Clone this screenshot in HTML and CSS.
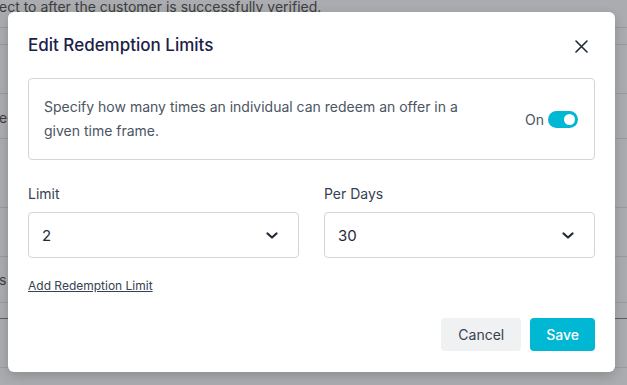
FILE: index.html
```html
<!DOCTYPE html>
<html lang="en">
<head>
<meta charset="UTF-8">
<meta name="viewport" content="width=device-width, initial-scale=1.0">
<title>Edit Redemption Limits</title>
<link rel="stylesheet" href="styles.css">
</head>
<body>
    <!-- page behind the dialog, dimmed -->
    <div class="page">
        <div class="row row-top"><span class="bg-text">ect to after the customer is successfully verified.</span></div>
        <div class="row h17"></div>
        <div class="row h49"></div>
        <div class="row h45"><span class="bg-side">ec</span></div>
        <div class="row h69"></div>
        <div class="row h49"></div>
        <div class="row h46"><span class="bg-side">s</span></div>
        <div class="row h16"></div>
        <div class="row h49 dark"></div>
        <div class="row h18"></div>
    </div>

    <div class="modal">
        <div class="modal-head">
            <h2 class="modal-title">Edit Redemption Limits</h2>
            <button class="close-btn" aria-label="Close">
                <svg width="13" height="13" viewBox="0 0 13 13"><path d="M1 1L12 12M12 1L1 12" stroke="#1f2937" stroke-width="1.6" stroke-linecap="round"/></svg>
            </button>
        </div>

        <div class="info-box">
            <p class="info-text">Specify how many times an individual can redeem an offer in a given time frame.</p>
            <div class="toggle-wrap">
                <span class="toggle-label">On</span>
                <span class="toggle"><span class="knob"></span></span>
            </div>
        </div>

        <div class="fields">
            <div class="field">
                <label class="field-label">Limit</label>
                <div class="select">
                    <span>2</span>
                    <svg width="12" height="7" viewBox="0 0 12 7"><path d="M1.5 1.5L6 5.5L10.5 1.5" fill="none" stroke="#1f2937" stroke-width="2.2" stroke-linecap="round" stroke-linejoin="round"/></svg>
                </div>
            </div>
            <div class="field">
                <label class="field-label">Per Days</label>
                <div class="select">
                    <span>30</span>
                    <svg width="12" height="7" viewBox="0 0 12 7"><path d="M1.5 1.5L6 5.5L10.5 1.5" fill="none" stroke="#1f2937" stroke-width="2.2" stroke-linecap="round" stroke-linejoin="round"/></svg>
                </div>
            </div>
        </div>

        <a class="add-link" href="#">Add Redemption Limit</a>

        <div class="modal-foot">
            <button class="btn btn-cancel">Cancel</button>
            <button class="btn btn-save">Save</button>
        </div>
    </div>
</body>
</html>
```

FILE: styles.css
```css
*{
    box-sizing: border-box;
}
body{
    margin:0;
    width:627px;
    height:385px;
    overflow:hidden;
    background:#abacaf;
    font-family: Inter, "Noto Sans", sans-serif;
}
.page{
    width:100%;
}
.row{
    border-top:1px solid #9a9b9e;
    position:relative;
}
.row-top{
    height:27px;
    border-top:none;
}
.h16{height:16px;}
.h17{height:17px;}
.h18{height:18px;}
.h45{height:45px;}
.h46{height:46px;}
.h49{height:49px;}
.h69{height:69px;}
.dark{
    border-top-color:#5d5e61;
}
.bg-text{
    display:block;
    margin-left:-1px;
    font-size:14px;
    line-height:14px;
    color:#3d3e41;
    white-space:nowrap;
    margin-top:0;
}
.bg-side{
    display:block;
    margin-left:-1px;
    padding-top:16px;
    font-size:14px;
    line-height:16px;
    color:#3d3e41;
}
.h46 .bg-side{
    padding-top:15px;
}

/* dialog */
.modal{
    position:absolute;
    left:8px;
    top:12px;
    width:607px;
    height:360px;
    background:#fff;
    border-radius:6px;
    box-shadow:0 4px 12px rgba(0,0,0,0.18);
    padding:20px 20px 20px 20px;
}
.modal-head{
    display:flex;
    align-items:center;
    justify-content:space-between;
    height:26px;
}
.modal-title{
    margin:0;
    font-size:17px;
    font-weight:500;
    color:#1b2146;
    line-height:26px;
}
.close-btn{
    border:none;
    background:none;
    padding:0;
    width:24px;
    height:24px;
    display:flex;
    align-items:center;
    justify-content:center;
    margin-right:2px;
    margin-top:2px;
}
.info-box{
    margin-top:20px;
    border:1px solid #d2d5da;
    border-radius:4px;
    padding:16px 16px 16px 15px;
    display:flex;
    align-items:center;
    justify-content:space-between;
}
.info-text{
    margin:0;
    width:430px;
    font-size:14px;
    line-height:24px;
    color:#4b5563;
}
.toggle-wrap{
    display:flex;
    align-items:center;
    gap:4px;
}
.toggle-label{
    font-size:14px;
    color:#4b5563;
}
.toggle{
    width:30px;
    height:17px;
    border-radius:9px;
    background:#00b7d4;
    display:flex;
    align-items:center;
    justify-content:flex-end;
    padding-right:3px;
}
.knob{
    width:11px;
    height:11px;
    border-radius:50%;
    background:#fff;
}
.fields{
    margin-top:24px;
    display:grid;
    grid-template-columns:1fr 1fr;
    gap:25px;
}
.field-label{
    display:block;
    font-size:14px;
    line-height:20px;
    color:#374151;
    margin-bottom:8px;
}
.select{
    height:46px;
    border:1px solid #d2d5da;
    border-radius:4px;
    display:flex;
    align-items:center;
    justify-content:space-between;
    padding:0 20px 0 13px;
    font-size:15px;
    color:#1f2937;
}
.add-link{
    display:inline-block;
    margin-top:20px;
    font-size:12px;
    line-height:16px;
    color:#374151;
    text-decoration:underline;
}
.modal-foot{
    margin-top:24px;
    display:flex;
    justify-content:flex-end;
    gap:9px;
}
.btn{
    height:33px;
    border:none;
    border-radius:4px;
    padding:0 17px;
    font-family: Inter, "Noto Sans", sans-serif;
    font-size:14px;
}
.btn-cancel{
    background:#f0f1f3;
    color:#374151;
}
.btn-save{
    background:#00b7d4;
    color:#fff;
    font-weight:500;
    padding:0 16px;
}
```
